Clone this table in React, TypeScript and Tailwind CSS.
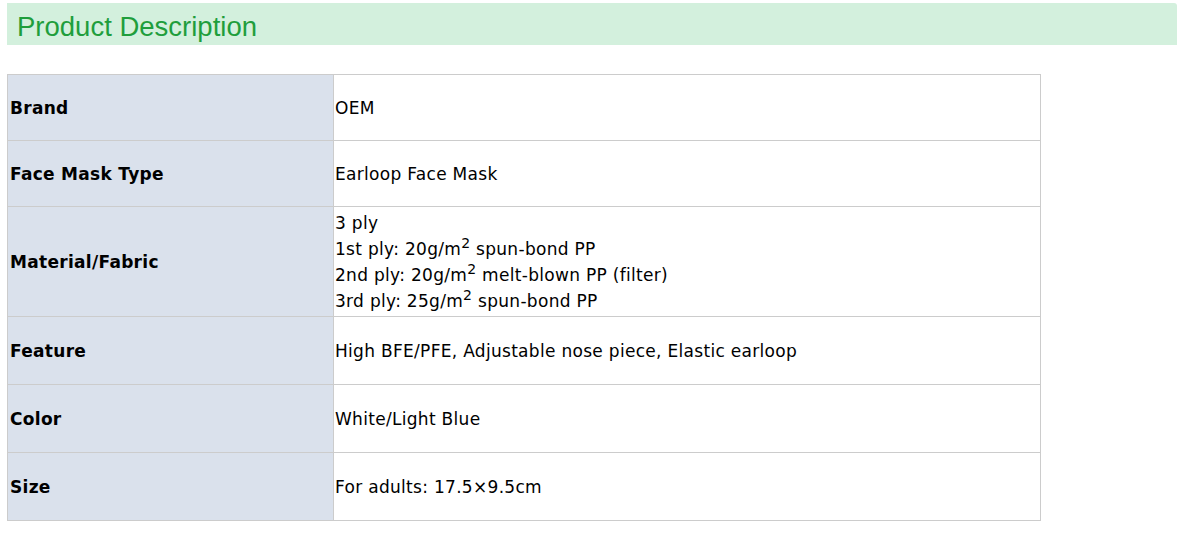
const rows: { label: string; value: React.ReactNode; h: string }[] = [
  { label: "Brand", value: "OEM", h: "h-[66px]" },
  { label: "Face Mask Type", value: "Earloop Face Mask", h: "h-[66px]" },
  {
    label: "Material/Fabric",
    value: (
      <>
        3 ply
        <br />
        1st ply: 20g/m<sup className="text-[14px]">2</sup> spun-bond PP
        <br />
        2nd ply: 20g/m<sup className="text-[14px]">2</sup> melt-blown PP (filter)
        <br />
        3rd ply: 25g/m<sup className="text-[14px]">2</sup> spun-bond PP
      </>
    ),
    h: "h-[110px]",
  },
  { label: "Feature", value: "High BFE/PFE, Adjustable nose piece, Elastic earloop", h: "h-[68px]" },
  { label: "Color", value: "White/Light Blue", h: "h-[68px]" },
  { label: "Size", value: "For adults: 17.5×9.5cm", h: "h-[68px]" },
];

export default function App() {
  return (
    <div className="bg-white min-h-[540px] pt-[3px] pl-[7px]">
      <div className="w-[1170px] h-[42px] bg-[#d3f0dd] rounded-tr-[3px] flex items-center pl-[10px]">
        <h2 className="text-[27.5px] text-[#1f9e3c] font-['Liberation_Sans',Arial,sans-serif] leading-none pt-[5px]">
          Product Description
        </h2>
      </div>
      <table className="mt-[29px] w-[1034px] border-collapse font-['DejaVu_Sans',Verdana,sans-serif] text-[17px] tracking-[0.3px] text-black">
        <tbody>
          {rows.map((r) => (
            <tr key={r.label} className={r.h}>
              <td className="w-[326px] bg-[#dae1ec] border border-[#cccccc] font-bold pl-[2px] pr-[2px] pt-[2px] align-middle">
                {r.label}
              </td>
              <td className="border border-[#cccccc] pl-[1px] pr-[2px] align-middle leading-[26px]">{r.value}</td>
            </tr>
          ))}
        </tbody>
      </table>
    </div>
  );
}
